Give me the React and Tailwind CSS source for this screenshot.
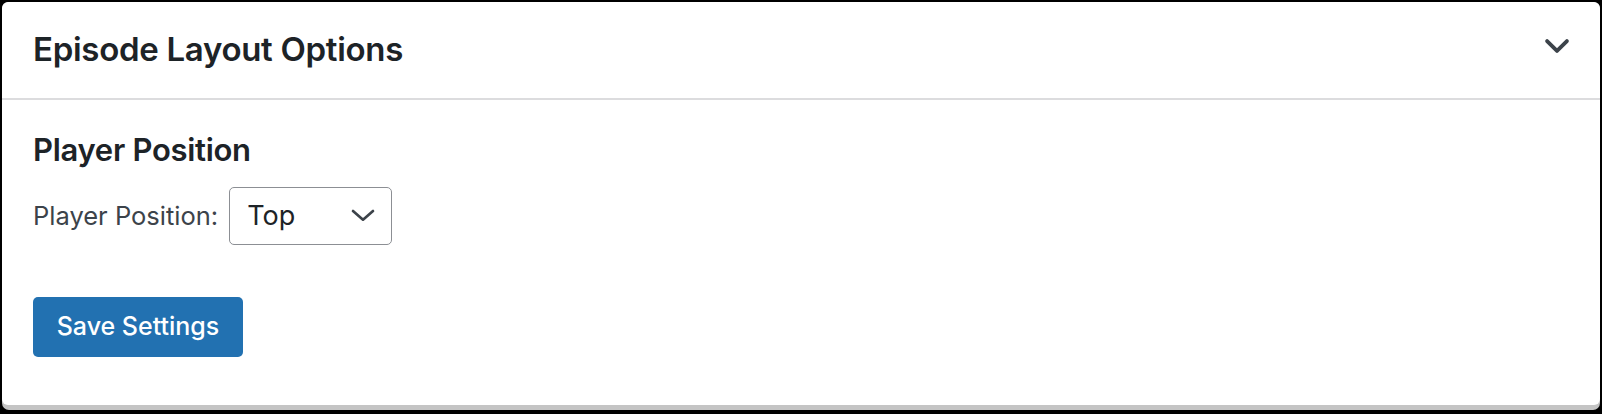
import { useState } from "react";

function Chevron({ className, d = "M5 8.5l7 7 7-7" }) {
  return (
    <svg viewBox="0 0 24 24" className={className} fill="none" stroke="currentColor" strokeLinecap="round" strokeLinejoin="round">
      <path d={d} />
    </svg>
  );
}

export default function App() {
  const [position, setPosition] = useState("Top");

  return (
    <div className="min-h-screen bg-black pt-[2px] pl-[2px] pr-[2px] pb-[4px] font-['Inter',sans-serif]">
      {/* grey lip under the panel */}
      <div className="bg-[#c4c4c4] rounded-[7px] pb-[5px]">
        <div className="bg-white rounded-[6px] h-[403px] flex flex-col">
          <div className="h-[98px] shrink-0 flex items-center justify-between pl-[31px] pr-[26px] border-b-2 border-[#dcdcde]">
            <h2 className="text-[33px] font-semibold text-[#1d2327] tracking-[-0.3px]">Episode Layout Options</h2>
            <Chevron className="w-[34px] h-[34px] stroke-[2.7] text-[#3c434a] -mt-[8px]" />
          </div>

          <div className="pl-[31px] pt-[30px]">
            <h3 className="text-[31px] leading-[40px] font-semibold text-[#1d2327] tracking-[-0.3px]">Player Position</h3>

            <div className="flex items-center gap-[11px] mt-[17px]">
              <label className="text-[25.5px] text-[#3c434a]">Player Position:</label>
              <div className="relative w-[163px] h-[58px] border border-[#8c8f94] rounded-[5px] flex items-center pl-[17px]">
                <span className="text-[27px] text-[#1d2327]">{position}</span>
                <Chevron
                  d="M4.5 9l7.5 6.5 7.5-6.5"
                  className="absolute right-[12px] top-[11px] w-[32px] h-[32px] stroke-[2] text-[#3c434a]"
                />
                <select
                  value={position}
                  onChange={(e) => setPosition(e.target.value)}
                  className="absolute inset-0 opacity-0 cursor-pointer"
                >
                  <option>Top</option>
                  <option>Bottom</option>
                </select>
              </div>
            </div>

            <button className="mt-[52px] w-[210px] h-[60px] bg-[#2271b1] rounded-[5px] text-white text-[25px] font-medium">
              Save Settings
            </button>
          </div>
        </div>
      </div>
    </div>
  );
}
